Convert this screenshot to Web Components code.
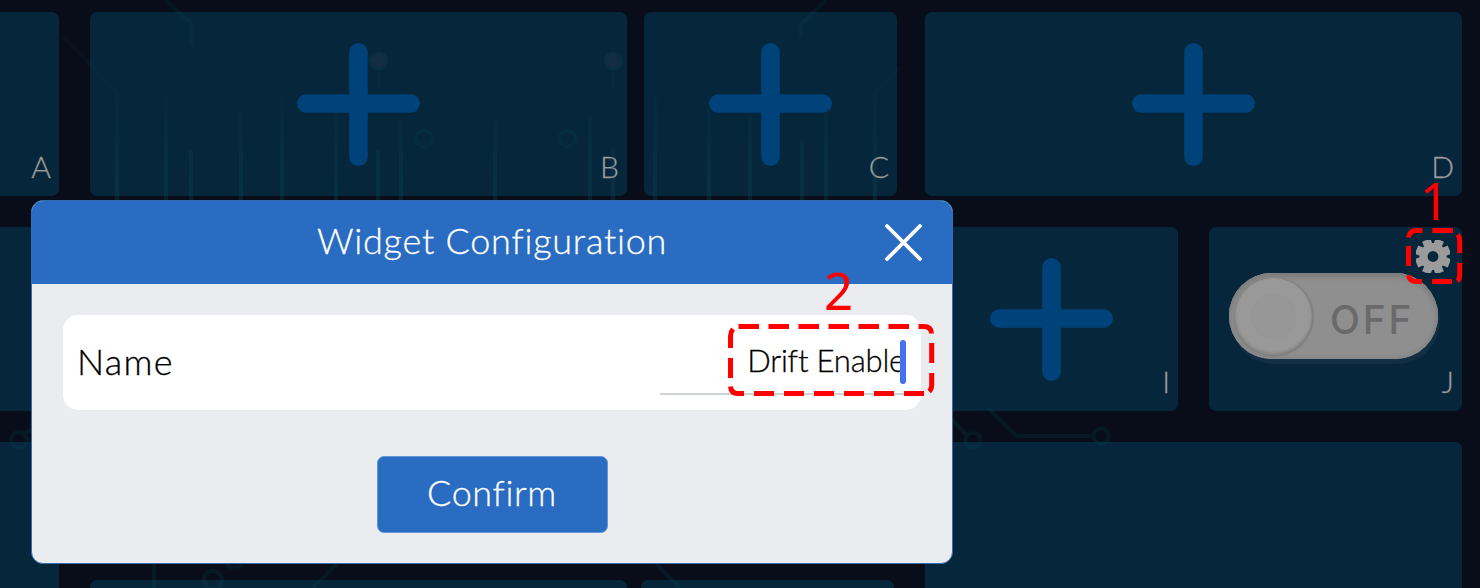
<!DOCTYPE html>
<html lang="en">
<head>
<meta charset="utf-8">
<title>Widget Configuration</title>
<style>
html,body{margin:0;height:100%;overflow:hidden;background:#080d19}
body{font-family:Lato,"Open Sans",sans-serif;font-weight:300;-webkit-text-stroke:.3px currentColor}
</style>
</head>
<body>
<widget-board>
  <board-row style="--h:184px">
    <board-tile style="--w:59px" label="A" cut empty></board-tile>
    <board-tile style="--w:537px;margin-left:31px" label="B"></board-tile>
    <board-tile style="--w:253px;margin-left:17px" label="C"></board-tile>
    <board-tile style="--w:537px;margin-left:28px" label="D"></board-tile>
  </board-row>
  <board-row style="--h:184px">
    <board-tile style="--w:59px" cut empty></board-tile>
    <board-tile style="--w:253px;margin-left:866px" label="I"></board-tile>
    <board-tile style="--w:253px;margin-left:31px" label="J" empty><toggle-switch></toggle-switch></board-tile>
  </board-row>
  <board-row style="--h:184px">
    <board-tile style="--w:59px" cut empty></board-tile>
    <board-tile style="--w:537px;margin-left:31px;margin-top:138px" empty></board-tile>
    <board-tile style="--w:253px;margin-left:14px;margin-top:138px" empty></board-tile>
    <board-tile style="--w:537px;margin-left:31px" empty></board-tile>
  </board-row>
</widget-board>
<circuit-lines></circuit-lines>
<config-dialog>
  <span slot="title">Widget Configuration</span>
  <name-field slot="body" label="Name" value="Drift Enable"></name-field>
  <span slot="action">Confirm</span>
</config-dialog>
<callout-marks></callout-marks>
<script>
function define(name, html, after) {
  const t = document.createElement('template');
  t.innerHTML = html;
  customElements.define(name, class extends HTMLElement {
    constructor() {
      super();
      this.attachShadow({mode: 'open'}).append(t.content.cloneNode(true));
    }
    connectedCallback() { if (after) after(this, this.shadowRoot); }
  });
}

define('widget-board', `<style>
:host{display:flex;flex-direction:column;gap:31px;box-sizing:border-box;padding-top:12px;width:1480px;height:588px;overflow:hidden;background:#080d19}
</style><slot></slot>`);

define('board-row', `<style>
:host{display:flex;flex:none;height:var(--h)}
</style><slot></slot>`);

define('board-tile', `<style>
:host{position:relative;display:flex;align-items:center;justify-content:center;flex:none;width:var(--w);background:#06263b;border-radius:7px}
:host([cut]){border-radius:0 7px 7px 0}
:host([empty]) .plus{display:none}
.plus{display:block;width:123px;height:123px;margin-bottom:-1px}
.label{position:absolute;right:8px;bottom:16px;font-size:30px;line-height:28px;color:#9b9b9b}
</style>
<svg class="plus" viewBox="0 0 123 123"><path d="M61.5 9.3v104.4M9.3 60.500H113.700" stroke="#00427a" stroke-width="18.600" stroke-linecap="round"/></svg>
<slot></slot><span class="label"></span>`, (el, root) => {
  root.querySelector('.label').textContent = el.getAttribute('label') || '';
});

define('toggle-switch', `<style>
:host{display:block;width:253px;height:184px}
.gear{position:absolute;left:207px;top:13px;width:34px;height:33px}
.track{box-sizing:border-box;display:flex;align-items:center;width:209px;height:86px;margin:46px 0 0 20px;padding:0 24px 0 6px;border-radius:43px;background:#8f8f8f;box-shadow:inset 0 4px 5px #7d7d7d,inset 0 0 4px #787878,inset 0 0 0 1px #999,2px 5px 1px #142f45}
.knob{display:flex;align-items:center;justify-content:center;flex:none;width:77px;height:77px;border-radius:50%;background:#999;box-shadow:0 1px 3px #747474,inset 0 -2px 3px #858585,2px 0 1px #858585}
.knob i{width:43px;height:43px;border-radius:50%;background:#979797;box-shadow:0 0 2px #919191}
b{margin-left:18px;margin-top:7px;font:500 39px/40px Inter,sans-serif;letter-spacing:2.8px;color:#6a6a6a;-webkit-text-stroke:0}
</style>
<div class="track"><div class="knob"><i></i></div><b>OFF</b></div>
<svg class="gear" viewBox="-17 -16.500 34 33"><g id="g" stroke="#9b9b9b" stroke-width="8.800" stroke-linecap="butt" stroke-linejoin="round"></g><circle r="13.500" fill="#9b9b9b"/><circle r="5.400" fill="#06263b"/></svg>`, (el, root) => {
  root.querySelector('#g').innerHTML = [22.5, 67.5, 112.5, 157.5].map(a =>
    `<path d="M-17.800 0H17.800" transform="rotate(${a})"/>`).join('');
});

define('circuit-lines', `<style>
:host{position:absolute;inset:0;pointer-events:none}
svg{display:block;width:1480px;height:588px}
</style>
<svg viewBox="0 0 1480 588" fill="none" stroke="#0b5065" stroke-width="4">
<defs><linearGradient id="f" gradientUnits="userSpaceOnUse" x1="0" y1="80" x2="0" y2="200"><stop offset="0" stop-color="#0b5065" stop-opacity="0.030"/><stop offset="1" stop-color="#0b5065" stop-opacity=".27"/></linearGradient></defs>
<g stroke="url(#f)"><path d="M117 92V200M166 93V200M191 150V200M241 112V200M282 95V200M336 110V200M378 150V200M401 120V200M495 120V200M590 115V200M613 150V200M655 95V200M709 110V200M750 115V200M802 140V200M826 110V200M875 93V200"/></g>
<g opacity=".16"><path d="M165 0L191 23V45M826 0L801 24V36" /><path d="M62 36L117 92M900 67L875 92" opacity=".6"/><path d="M378.500 70V88M613.500 70V88" opacity=".6"/><circle cx="424" cy="138.500" r="8"/><circle cx="567.500" cy="138.500" r="8"/></g>
<g fill="#132e42" stroke="#0a2f44" stroke-width="3"><circle cx="378.500" cy="61" r="8"/><circle cx="613.500" cy="61" r="8"/></g>
<g opacity=".18"><circle cx="19" cy="440" r="8"/><path d="M25 434l7-6"/><circle cx="973" cy="440" r="7.500"/><path d="M950 418l17 17M988 408l29 28h77"/><circle cx="1101" cy="436" r="7.500"/><circle cx="213" cy="580" r="9"/><path d="M154 564V588M337 564L313 588M656 564l24 24M226 564q9 7 17 0"/></g>
</svg>`);

define('config-dialog', `<style>
:host{position:absolute;left:31px;top:200px;width:922px;height:364px;box-sizing:border-box;border:1px solid #356eae;border-radius:12px;background:#ebecf0;overflow:hidden;display:flex;flex-direction:column}
header{position:relative;display:flex;align-items:center;justify-content:center;height:83px;flex:none;background:#296cc1;color:#fff;font-size:36px;line-height:44px;letter-spacing:.75px}
header ::slotted(span){display:block;margin-top:-6px}
header svg{position:absolute;right:30px;top:23px;width:37px;height:37px}
main{padding:31px 31px 0}
footer{display:flex;justify-content:center;padding-top:46px}
button{width:231px;height:77px;border:1px solid #6397d8;border-radius:7px;background:#296cc1;color:#fff;font:inherit;font-size:36px;padding:0 0 5px;letter-spacing:.6px}
</style>
<header><slot name="title"></slot><svg viewBox="0 0 37 37"><path d="M2 2L35 35M35 2L2 35" stroke="#fff" stroke-width="3.800" stroke-linecap="round"/></svg></header>
<main><slot name="body"></slot></main>
<footer><button><slot name="action"></slot></button></footer>`);

define('name-field', `<style>
:host{display:flex;justify-content:space-between;box-sizing:border-box;height:95px;padding:0 16px 0 14px;border-radius:15px;background:#fff;color:#000}
label{font-size:36px;line-height:93px;letter-spacing:1.3px}
.input{position:relative;box-sizing:border-box;width:245px;height:80px;border-bottom:2px solid #cfd3d8;text-align:right;font-size:31px;line-height:91px;letter-spacing:-.2px;white-space:nowrap}
.input i{position:absolute;right:-1px;top:25px;width:6px;height:44px;border-radius:3px;background:#4670f0}
</style><label></label><div class="input"><span></span><i></i></div>`, (el, root) => {
  root.querySelector('label').textContent = el.getAttribute('label');
  root.querySelector('span').textContent = el.getAttribute('value');
});

define('callout-marks', `<style>
:host{position:absolute;inset:0;pointer-events:none}
svg{display:block;width:1480px;height:588px}
text{font:400 51px "Noto Sans",sans-serif;fill:#f00;stroke:none;-webkit-text-stroke:0}
</style>
<svg viewBox="0 0 1480 588" fill="none" stroke="#f00" stroke-width="5">
<path d="M738.500 326.500H910" stroke-dasharray="20.500 9.500"/>
<path d="M754 393.500H925" stroke-dasharray="20 10"/>
<path d="M918.500 326.500h5q8 0 8 7M931.700 343v20M931.700 373v12q0 4-2.500 6.500M744 393.500h-6q-7 0-7.500-7M730.500 378v-20M730.500 348v-12q0-4 2.500-7"/>
<path d="M1422.500 230.500h-6q-7 0-8 7M1432.300 230.500H1453M1408.500 246v20M1408.500 275.300q1 6.200 8 6.200H1422M1432 281.500h20M1459.700 253v-12q0-4-2-6.500M1459.700 263v12q0 4-2.500 6"/>
<text x="1420" y="220">1</text><text x="824" y="310">2</text>
</svg>`);
</script>
</body>
</html>
